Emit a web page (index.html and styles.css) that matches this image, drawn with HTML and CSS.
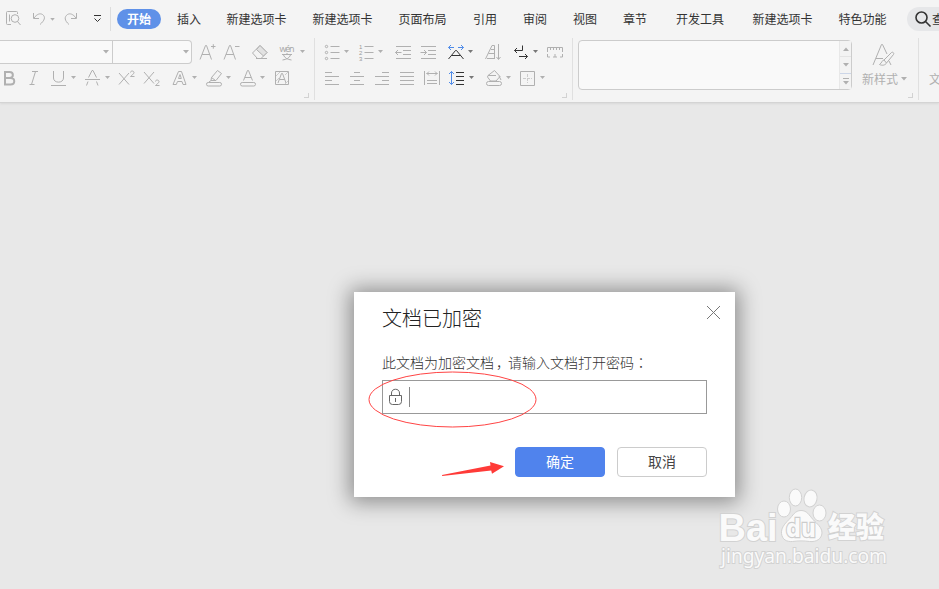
FILE: index.html
```html
<!DOCTYPE html>
<html lang="zh-CN">
<head>
<meta charset="utf-8">
<title>文档已加密</title>
<link rel="stylesheet" href="styles.css">
</head>
<body>
<svg class="defs" width="0" height="0">
  <symbol id="caret" viewBox="0 0 6 4"><path d="M0 0h6L3 3.6z" fill="currentColor"/></symbol>
  <symbol id="letter-a" viewBox="0 0 20 24"><path d="M4 19.500 9.500 5.500h1L15.500 19.500M6 14.500h8"/></symbol>
</svg>
<header class="ribbon">
  <div class="tabbar">
    <div class="quick">
      <svg width="20" height="20" viewBox="0 0 20 20"><path d="M6 15.500H2.500a1 1 0 0 1-1-1V3.500a1 1 0 0 1 1-1h9a1 1 0 0 1 1 1V5M4.500 5.500v7"/><circle cx="10" cy="9.500" r="3.800"/><path d="m12.500 12.500 3 3.500"/></svg>
      <svg width="17" height="20" viewBox="0 0 17 20"><path d="M1.500 4v5.500H7M2 9c3-4 6-5 8.500-3.500 3.500 2.500 2 6-2.500 10"/></svg>
      <svg class="mini" width="5" height="3"><use href="#caret"/></svg>
      <svg class="redo" width="17" height="20" viewBox="0 0 17 20"><path d="M12.500 4v5.500H7M12 9C9 5 6 4 3.500 5.500 0 8 .5 11.500 5 15.500"/></svg>
      <svg class="more" width="9" height="8" viewBox="0 0 9 8"><path d="M1 .5h7M1.500 3.500l3 3 3-3"/></svg>
    </div>
    <nav class="tabs">
      <span class="active">开始</span><span>插入</span><span>新建选项卡</span><span>新建选项卡</span><span>页面布局</span><span>引用</span><span>审阅</span><span>视图</span><span>章节</span><span>开发工具</span><span>新建选项卡</span><span>特色功能</span>
    </nav>
    <div class="search">
      <svg width="17" height="17" viewBox="0 0 17 17"><circle cx="6.500" cy="6.500" r="5.500"/><path d="m10.500 10.500 5 5"/></svg><span>查</span>
    </div>
  </div>
  <div class="tools">
    <section class="group font-group">
      <div class="row font-top">
        <div class="combo"><i class="drop"><svg width="6" height="4"><use href="#caret"/></svg></i><i class="drop"><svg width="6" height="4"><use href="#caret"/></svg></i></div>
        <b><svg class="ic"><use href="#letter-a" x="-2"/><path d="M13 6.500h4.500M15.300 4.200v4.500"/></svg></b>
        <b><svg class="ic"><use href="#letter-a" x="-2"/><path d="M13 6.500h4.500"/></svg></b>
        <b><svg class="ic"><path d="M2.500 13 10 5.500l7 7-6 6H7.500z"/><path class="fill" d="m6.500 9.500 3.500-4 7 7-3.500 3.500z"/><path d="M6 18.500h11"/></svg></b>
        <b><svg class="ic"><text class="pinyin" x="1.500" y="12" textLength="15">wén</text><path d="M4 14.500h10M9 13v2M5.500 15c1 3 4 4.500 8 5M12.500 15c-1 3-4 4.500-8 5"/></svg><svg class="caret"><use href="#caret"/></svg></b>
      </div>
      <div class="row font-bottom">
        <b><svg class="ic"><path class="heavy" d="M5 6h4.500c4.500 0 4.500 6 0 6H5zM5 12h5.500c5 0 5 6.500 0 6.500H5z"/></svg></b>
        <b><svg class="ic"><path d="M9 5.500h6M12.500 5.500 8.500 18.500M6.500 18.500h5"/></svg></b>
        <b><svg class="ic"><path d="M4.500 5v7c0 5.500 10 5.500 10 0V5M2 19.500h15"/></svg><svg class="caret"><use href="#caret"/></svg></b>
        <b><svg class="ic"><path d="M5.500 11.500 9 4.500h1l3.500 7M2 13.500h15M5 15.500l-1.500 4M13.500 15.500l1.500 4"/></svg><svg class="caret"><use href="#caret"/></svg></b>
        <b><svg class="ic"><path d="m2 7 10 11.500M12 7 2 18.500M13.500 6.500c0-2 3.500-2 3.500.200 0 1.300-2 2-3.500 3.800h4"/></svg></b>
        <b><svg class="ic"><path d="m2 6 10 11.500M12 6 2 17.500M13.500 15.500c0-2 3.500-2 3.500.200 0 1.300-2 2-3.500 3.800h4"/></svg></b>
        <b><svg class="ic"><path d="M3 18.500 8.500 5.500h3L16 18.500h-3l-1-3H7.500l-1.200 3zM8.500 12.500h2.800L10 8.500z"/></svg><svg class="caret"><use href="#caret"/></svg></b>
        <b><svg class="ic"><path d="m7.500 11.500 6-7 4 3-5.500 7H7zM7.500 11.500l4 3M7 14.500l-2 1.500"/><rect x="2.500" y="16.500" width="15" height="3.500" rx="1.700"/></svg><svg class="caret"><use href="#caret"/></svg></b>
        <b><svg class="ic"><path d="M5.500 14.500 9.500 4.500h1l4 10M7 11.500h6"/><rect x="2.500" y="16.500" width="15" height="3.500" rx="1.700"/></svg><svg class="caret"><use href="#caret"/></svg></b>
        <b><svg class="ic"><path d="M3.500 5.500h13v13h-13zM6 17l3.500-9.500h1L14 17M7.500 13.500h5"/><path class="light" d="m4 10 4-4M4 15l3-3M13 9l3-3M13 18l3-3"/></svg></b>
      </div>
      <i class="corner"></i>
    </section>
    <section class="group para-group">
      <div class="row para-top">
        <b><svg class="ic"><path d="M8.500 6.500h9M8.500 12.500h9M8.500 18.500h9"/><circle cx="4.500" cy="6.500" r="1.200"/><circle cx="4.500" cy="12.500" r="1.200"/><circle cx="4.500" cy="18.500" r="1.200"/></svg><svg class="caret"><use href="#caret"/></svg></b>
        <b><svg class="ic"><path d="M8.500 6.500h9M8.500 12.500h9M8.500 18.500h9"/><text class="digit" x="3" y="8.500">1</text><text class="digit" x="3" y="14.500">2</text><text class="digit" x="3" y="20.500">3</text></svg><svg class="caret"><use href="#caret"/></svg></b>
        <b><svg class="ic"><path d="M3 6.500h15M10 10.500h8M10 14.500h8M3 18.500h15M2.500 12.500h6M5 10l-2.500 2.500L5 15"/></svg></b>
        <b><svg class="ic"><path d="M3 6.500h15M10 10.500h8M10 14.500h8M3 18.500h15M2.500 12.500h6M6 10l2.500 2.500L6 15"/></svg></b>
        <b class="on"><svg class="ic"><path class="blue" d="M2.500 7.500H8M5 5 2.500 7.500 5 10M12 7.500h5.500M15 5l2.500 2.500L15 10"/><path d="m2.500 19 7-8.500h1l7 8.500M5.500 15.500h9"/></svg><svg class="caret"><use href="#caret"/></svg></b>
        <b><svg class="ic"><path d="M2.500 19 9 5.500h2.500v13M5.500 13.500h6M4 18.500h8M8 9.500h3M15.500 4v15M13.500 17l2 2.500 2-2.500"/></svg></b>
        <b class="on"><svg class="ic"><path d="M11.500 5.500v5h-8M6 8l-2.500 2.500L6 13M8 16.500h8.500M14 14l2.500 2.500L14 19"/></svg><svg class="caret"><use href="#caret"/></svg></b>
        <b><svg class="ic"><path d="M2.500 12V7.500h15V12M5.500 8v2M8.500 8v2M11.500 8v2M14.500 8v2M2.500 14v3H5M15 17h2.500v-3M8 17h4M10 14v3"/></svg></b>
      </div>
      <div class="row para-bottom">
        <b><svg class="ic"><path d="M3 6.500h7M3 10.500h14M3 14.500h7M3 18.500h14"/></svg></b>
        <b><svg class="ic"><path d="M7 6.500h6M3 10.500h14M7 14.500h6M3 18.500h14"/></svg></b>
        <b><svg class="ic"><path d="M10 6.500h7M3 10.500h14M10 14.500h7M3 18.500h14"/></svg></b>
        <b><svg class="ic"><path d="M3 6.500h14M3 10.500h14M3 14.500h14M3 18.500h14"/></svg></b>
        <b><svg class="ic"><path d="M2.500 5v14M17.500 5v14M5 14.500h10M5 17.500h10M4.500 7.500h11M7 5.500l-2 2 2 2M13 5.500l2 2-2 2"/></svg></b>
        <b class="on"><svg class="ic"><path class="blue" d="M4.500 5.500v13M2 8l2.500-2.500L7 8M2 16l2.500 2.500L7 16"/><path d="M9 6.500h8M9 10.500h8M9 14.500h8M9 18.500h8"/></svg><svg class="caret"><use href="#caret"/></svg></b>
        <b><svg class="ic"><path d="M4 9.500 10.500 4.500l5.500 6-4 4.500H6.500L3.500 11zM4 9.500h8M15 10l2 4"/><rect x="2.500" y="15.500" width="15" height="4" rx="2"/></svg><svg class="caret"><use href="#caret"/></svg></b>
        <b><svg class="ic"><path d="M2.500 5.500h14v14h-14z"/><path class="light" d="M9.500 8v9M5 12.500h9" stroke-dasharray="3 1"/></svg><svg class="caret"><use href="#caret"/></svg></b>
      </div>
      <i class="corner"></i>
    </section>
    <section class="group style-group">
      <div class="gallery">
        <div class="steps">
          <i><svg class="up" width="6" height="4"><use href="#caret"/></svg></i>
          <i><svg width="6" height="4"><use href="#caret"/></svg></i>
          <i><svg width="6" height="7" viewBox="0 0 6 7"><path d="M0 .5h6"/><path class="solid" d="M0 3h6L3 6.500z"/></svg></i>
        </div>
      </div>
      <div class="new-style">
        <svg width="26" height="26" viewBox="0 0 26 26"><path d="M3 23 11.500 2.500h1L17 12M6 16.500h7M19 19l2 4"/><path class="brush" d="m14 18 7.500-7.500c1-1 3 .5 2 2L16.500 21M14 18c-2 0-2 3-4.500 4.500 3 1.500 6 .5 7-1.500z"/></svg>
        <span>新样式<svg width="6" height="4"><use href="#caret"/></svg></span>
      </div>
      <i class="corner"></i>
    </section>
    <section class="group tail">文</section>
  </div>
</header>

<main class="dialog">
  <div class="head"><h1>文档已加密</h1><svg width="15" height="15" viewBox="0 0 15 15"><path d="m1 1 13 13M14 1 1 14"/></svg></div>
  <p>此文档为加密文档<span class="comma">，</span>请输入文档打开密码<span class="colon" lang="ja">：</span></p>
  <div class="field">
    <svg width="15" height="18" viewBox="0 0 15 18"><path d="M1.500 7.500h12v6a3 3 0 0 1-3 3h-6a3 3 0 0 1-3-3zM3.500 7.500V5c0-5 8-5 8 0v2.500M7.500 10v4"/></svg>
    <i></i>
  </div>
  <div class="actions"><button class="ok">确定</button><button>取消</button></div>
</main>

<svg class="marks" width="172" height="112" viewBox="366 369 172 112">
  <ellipse cx="452.500" cy="399.500" rx="83.500" ry="27.500"/>
  <path d="m442 475 48.500-9.500-.5-3.500 14 4.200-12 7.500-.8-3.200-49 5.500z"/>
</svg>

<svg class="watermark" width="180" height="90" viewBox="714 484 180 90">
  <ellipse cx="784" cy="509" rx="6.500" ry="8"/><ellipse cx="795.500" cy="497.500" rx="6.200" ry="8.500"/><ellipse cx="810.500" cy="498.500" rx="6.500" ry="8.500" transform="rotate(12 810.500 498.500)"/><ellipse cx="819.500" cy="513" rx="6.500" ry="8"/>
  <path d="M801 510.500c-6 0-8 5-12 9-5 5-8 9-7.500 14 .7 6 5 8.500 11 8 6-.8 11-.8 17 0 7 .7 12-2.500 12.500-8.500 0-6-5-9-9-13.500-4-4.500-6-9-12-9z"/>
  <text class="brand" x="718.500" y="541" textLength="59" lengthAdjust="spacingAndGlyphs">Bai</text>
  <text class="du" x="786" y="536.500" textLength="30" lengthAdjust="spacingAndGlyphs">du</text>
  <text class="cn" x="828" y="538" textLength="56" lengthAdjust="spacingAndGlyphs">经验</text>
  <text class="url" x="721" y="562.500" textLength="166" lengthAdjust="spacingAndGlyphs">jingyan.baidu.com</text>
</svg>
</body>
</html>
```

FILE: styles.css
```css
* { box-sizing: border-box; }
body {
  margin: 0;
  height: 589px;
  overflow: hidden;
  position: relative;
  background: #e8e8e8;
  font: 12px/16px "Noto Sans CJK SC", sans-serif;
  color: #333;
}
svg { display: block; flex: none; fill: none; stroke: currentColor; overflow: visible; }
.defs { position: absolute; }
use { stroke: inherit; }
use[href="#caret"] { stroke: none; }

.ribbon { height: 103px; background: #f4f4f4; border-bottom: 1px solid #d4d4d4; box-shadow: 0 1px 2px #d8d8d8; overflow: hidden; }
.tabbar { display: flex; align-items: center; height: 38px; }
.quick { display: flex; flex: none; align-items: center; width: 111px; height: 24px; padding-left: 5px; border-right: 1px solid #ddd; color: #b0b0b0; }
.quick svg:nth-child(2) { margin-left: 7px; }
.quick .mini { margin-left: 1px; }
.quick .redo { margin-left: 9px; }
.quick .more { margin-left: 12px; color: #333; }
.tabs {
  display: grid;
  flex: none;
  grid-template-columns: 60px 49.5px 86px 86px 74.5px 50px 50px 50px 53px 76.5px 86px 68px;
  align-items: center;
  width: 796px;
  padding-left: 6px;
  white-space: nowrap;
}
.tabs .active { width: 44px; height: 20px; line-height: 20px; border-radius: 10px; background: #5f91e8; color: #fff; text-align: center; font-weight: 700; }
.search { display: flex; flex: none; align-items: center; width: 60px; height: 24px; padding-left: 8px; border-radius: 12px; background: #e6e7e9; white-space: nowrap; }
.search svg { stroke-width: 1.6; }

.tools { display: flex; height: 64px; color: #b0b0b0; }
.group { position: relative; height: 64px; flex: none; }
.group::after { content: ""; position: absolute; right: 0; top: 0; width: 1px; height: 62px; background: #e0e0e0; }
.font-group { width: 315px; padding-top: 2px; }
.para-group { width: 258px; padding: 2px 0 0 7px; }
.row { display: grid; height: 26px; align-items: start; }
.row b { display: flex; align-items: center; height: 24px; font-weight: 400; }
.font-top { grid-template-columns: 198px 24px 28px 28px 30px; }
.font-bottom { grid-template-columns: 23px 26px 34px 34px 25px 28px 34px 34px 34px 20px; }
.para-top { grid-template-columns: 34px 37px 25px 28px 37px 28px 34px 20px; }
.para-bottom { grid-template-columns: 25px 25px 25px 25px 25px 37px 34px 20px; }
.ic { width: 20px; height: 24px; }
.caret { width: 5px; height: 3.5px; margin-left: 2px; }
.on { color: #333; }
.on .caret { color: #777; }
.ic .blue { stroke: #4f8be8; }
.ic .heavy { stroke-width: 2; }
.ic .fill { fill: #e2e2e2; }
.ic .light { stroke: #ccc; }
.ic use { width: 20px; height: 24px; }
.pinyin { font: 9px "Noto Sans", sans-serif; fill: #aaa; stroke: none; }
.digit { font: 6px "Liberation Sans", sans-serif; fill: #999; stroke: none; }

.combo { display: grid; grid-template-columns: 113px 79px; width: 192px; height: 24px; border: 1px solid #ccc; border-left: 0; border-radius: 0 4px 4px 0; background: #f9f9f9; }
.drop { display: flex; align-items: center; justify-content: flex-end; padding-right: 3px; }
.drop:first-child { border-right: 1px solid #ccc; }
.corner { position: absolute; right: 6px; bottom: 4px; width: 5px; height: 5px; border: solid #d2d2d2; border-width: 0 1px 1px 0; }

.style-group { display: flex; width: 346px; padding: 2px 0 0 5px; }
.gallery { display: flex; justify-content: flex-end; width: 274px; height: 50px; border: 1px solid #ccc; border-radius: 4px; background: #f9f9f9; }
.steps { display: grid; grid-template-rows: 16px 17px 15px; width: 12px; background: #f3f3f3; border-left: 1px solid #e8e8e8; }
.steps i { display: grid; place-items: center; border-bottom: 1px solid #e4e4e4; }
.steps i:nth-child(2) { border-color: #ccd6e8; }
.steps i:last-child { border: 0; }
.steps .up { transform: rotate(180deg); }
.solid { fill: currentColor; stroke: none; }
.new-style { padding: 2px 0 0 10px; }
.new-style > svg { margin-left: 8px; }
.new-style span { display: flex; align-items: center; gap: 3px; margin-top: 3px; white-space: nowrap; }
.brush { fill: #f4f4f4; }
.tail { width: 20px; padding: 33px 0 0 10px; }
.tail::after { display: none; }

.dialog { position: absolute; left: 354px; top: 292px; width: 381px; height: 205px; padding: 14px 28px 0; background: #fff; box-shadow: 0 1px 20px 4px rgba(0, 0, 0, .4); }
.head { display: flex; justify-content: space-between; height: 48px; margin-right: -14px; }
.head svg { margin-top: -1px; color: #777; }
h1 { margin: 0; font-size: 20px; line-height: 24px; font-weight: 300; color: #222; }
p { margin: 0; height: 26px; line-height: 17px; font-size: 14px; font-weight: 300; white-space: nowrap; color: #333; }
.comma { display: inline-block; width: 14px; text-indent: 2px; }
.colon { font-family: "Noto Sans CJK JP", sans-serif; }
.field { display: flex; align-items: center; gap: 6px; width: 325px; height: 34px; padding-left: 5px; border: 1px solid #999; color: #666; }
.field i { width: 1px; height: 20px; background: #888; }
.actions { display: flex; justify-content: flex-end; gap: 12px; margin-top: 33px; }
button { width: 90px; height: 30px; padding: 0 0 2px; border: 1px solid #ccc; border-radius: 4px; background: #fff; color: #444; font: 14px/26px "Noto Sans CJK SC", sans-serif; }
.ok { border-color: #5083ed; background: #5083ed; color: #fff; }

.marks { position: absolute; left: 366px; top: 369px; }
.marks ellipse { stroke: #f44; }
.marks path { fill: #ff3b38; stroke: none; }

.watermark { position: absolute; left: 714px; top: 484px; fill: #fafafa; stroke: #d2d2d2; stroke-width: 1; }
.watermark text { paint-order: stroke; stroke-width: 2; }
.brand { font: 700 38px "Liberation Sans", sans-serif; }
.watermark .du { font: 700 24px "DejaVu Sans", sans-serif; stroke: #ccc; stroke-width: 2.5; }
.cn { font: 900 29px "Noto Sans CJK SC", sans-serif; }
.url { font: 20px "Noto Sans", sans-serif; }
```
